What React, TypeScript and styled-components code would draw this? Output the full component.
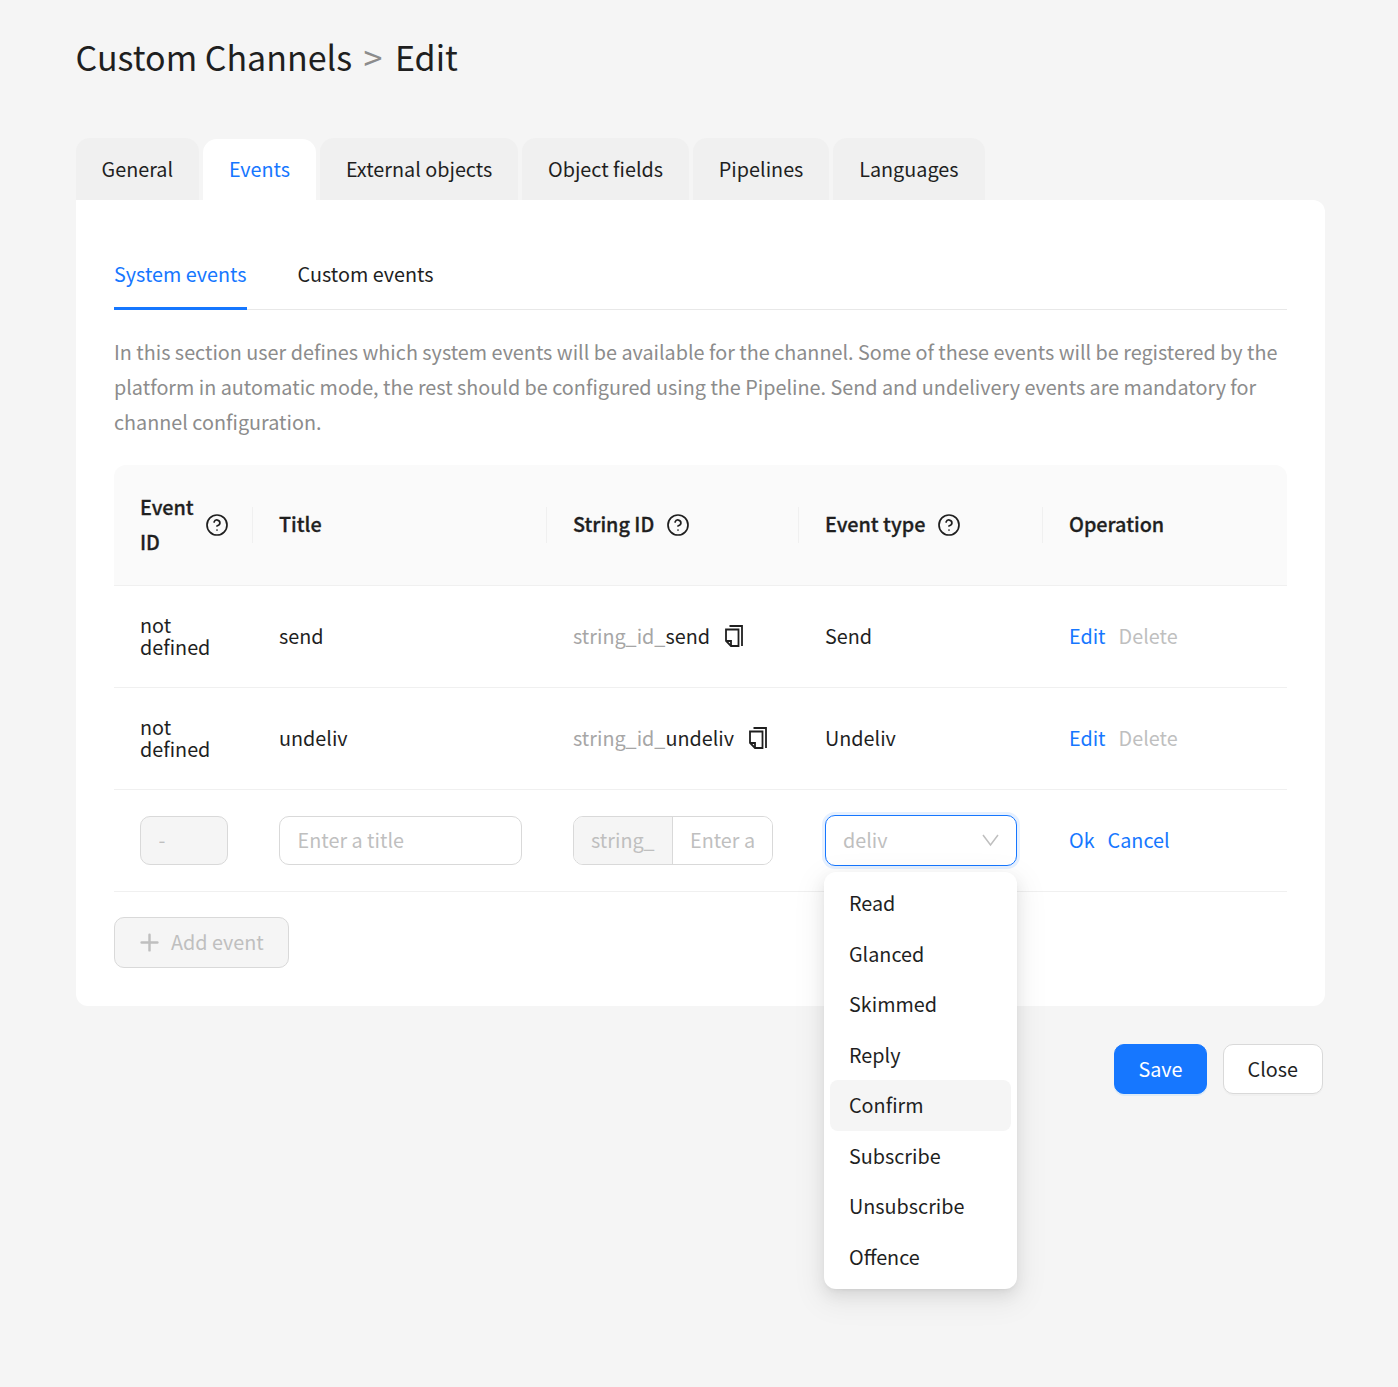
import { Fragment } from "react";
import styled, { createGlobalStyle } from "styled-components";
import { CircleHelp, Plus } from "lucide-react";

const GlobalStyle = createGlobalStyle`
  html, body {
    margin: 0;
    background: #f5f5f5;
    font-family: "Noto Sans CJK SC", "Noto Sans", sans-serif;
    color: #1f1f1f;
  }
  * { box-sizing: border-box; }
`;

const Page = styled.div`
  width: 1398px;
  height: 1387px;
  padding: 31px 73px 0 75.6px;
`;

const Breadcrumb = styled.h1`
  display: flex;
  align-items: center;
  height: 52px;
  margin: 0 0 55px;
  font-size: 34px;
  font-weight: 400;
  line-height: 52px;
`;

const Separator = styled.span`
  margin: 0 12.5px 0 11.5px;
  color: #8c8c8c;
`;

const TabBar = styled.div`
  display: flex;
  align-items: flex-end;
  gap: 3.8px;
  height: 62px;
`;

const Tab = styled.div<{ $active?: boolean }>`
  display: flex;
  align-items: center;
  height: ${(p) => (p.$active ? "61px" : "62px")};
  padding: 0 26px 2px;
  border-radius: 14px 14px 0 0;
  background: ${(p) => (p.$active ? "#fff" : "#f0f0f0")};
  color: ${(p) => (p.$active ? "#1677ff" : "#1f1f1f")};
  font-size: 19.8px;
`;

const Card = styled.div`
  width: 1249.4px;
  height: 806px;
  padding: 38px 38px 38px 38.4px;
  border-radius: 0 12px 12px 12px;
  background: #fff;
`;

const SubTabBar = styled.div`
  display: flex;
  gap: 51px;
  height: 72px;
  border-bottom: 1px solid #e8e8e8;
`;

const SubTab = styled.div<{ $active?: boolean }>`
  height: 72px;
  border-bottom: ${(p) => (p.$active ? "3px solid #1677ff" : "none")};
  color: ${(p) => (p.$active ? "#1677ff" : "#1f1f1f")};
  font-size: 19.8px;
  line-height: 72px;
`;

const Description = styled.p`
  margin: 24px 0 26px;
  color: #8c8c8c;
  font-size: 19.8px;
  line-height: 35px;
`;

const Table = styled.div`
  display: grid;
  grid-template-columns: 139px 294px 252px 244px 244px;
  font-size: 19.8px;
`;

const HeadCell = styled.div<{ $first?: boolean; $last?: boolean }>`
  position: relative;
  display: flex;
  align-items: center;
  gap: 12px;
  height: 121px;
  padding: 0 26px 3px;
  border-bottom: 1px solid #f0f0f0;
  background: #fafafa;
  border-radius: ${(p) => (p.$first ? "12px 0 0 0" : p.$last ? "0 12px 0 0" : "0")};
  font-weight: 500;
  line-height: 35px;
  -webkit-text-stroke: 0.3px #1f1f1f;

  &::after {
    content: "";
    display: ${(p) => (p.$last ? "none" : "block")};
    position: absolute;
    top: 42px;
    right: 0;
    width: 1px;
    height: 36px;
    background: #f0f0f0;
  }
`;

const HeadLabel = styled.span<{ $narrow?: boolean }>`
  flex: none;
  width: ${(p) => (p.$narrow ? "53px" : "auto")};
`;

const HelpIcon = styled(CircleHelp)`
  flex: none;
  width: 24px;
  height: 24px;
  margin-top: 2px;
  stroke-width: 1.7;
  color: #1f1f1f;
`;

const Cell = styled.div`
  display: flex;
  align-items: center;
  height: 102px;
  padding: 0 26px 2px;
  border-bottom: 1px solid #f0f0f0;
  line-height: 22px;
`;

const FormCell = styled(Cell)`
  padding-bottom: 0;
`;

const OverlayCell = styled(FormCell)`
  position: relative;
`;

const Prefix = styled.span`
  color: #a6a6a6;
`;

const CopyIcon = styled.svg`
  flex: none;
  width: 18px;
  height: 22px;
  margin-left: 15px;
  fill: none;
  stroke: #1f1f1f;
  stroke-width: 1.8;
`;

const Link = styled.span<{ $muted?: boolean }>`
  margin-right: 13px;
  color: ${(p) => (p.$muted ? "#bfbfbf" : "#1677ff")};
`;

const Field = styled.input<{ $width: string }>`
  width: ${(p) => p.$width};
  height: 49px;
  padding: 0 17.6px 2px;
  border: 1px solid #d9d9d9;
  border-radius: 10px;
  background: #fff;
  color: #1f1f1f;
  font: inherit;
  outline: none;

  &::placeholder {
    color: #bfbfbf;
    opacity: 1;
  }

  &:disabled {
    background: #f5f5f5;
  }
`;

const InputGroup = styled.div`
  display: flex;
  width: 200px;
  height: 49px;
  border: 1px solid #d9d9d9;
  border-radius: 10px;
  overflow: hidden;
`;

const Addon = styled.div`
  flex: none;
  width: 99px;
  padding-left: 17px;
  border-right: 1px solid #d9d9d9;
  background: #f5f5f5;
  color: #bfbfbf;
  line-height: 45px;
`;

const GroupInput = styled.input`
  flex: 1;
  min-width: 0;
  padding: 0 17px 2px;
  border: none;
  background: #fff;
  font: inherit;
  outline: none;

  &::placeholder {
    color: #bfbfbf;
    opacity: 1;
  }
`;

const SelectBox = styled.div`
  display: flex;
  align-items: center;
  justify-content: space-between;
  width: 194px;
  height: 51px;
  padding: 0 17px 2px;
  border: 1px solid #1677ff;
  border-radius: 10px;
  background: #fff;
  box-shadow: 0 0 0 3px rgba(22, 119, 255, 0.1);
  color: #bfbfbf;
`;

const Chevron = styled.svg`
  width: 17px;
  height: 14px;
  fill: none;
  stroke: #bfbfbf;
  stroke-width: 1.5;
`;

const Dropdown = styled.div`
  position: absolute;
  top: 82px;
  left: 25px;
  z-index: 2;
  width: 193px;
  padding: 6px 6px 7px;
  border-radius: 12px;
  background: #fff;
  box-shadow: 0 6px 16px rgba(0, 0, 0, 0.08), 0 3px 6px -4px rgba(0, 0, 0, 0.12),
    0 9px 28px 8px rgba(0, 0, 0, 0.05);
`;

const Option = styled.div<{ $active?: boolean }>`
  height: 50.55px;
  padding-left: 19px;
  border-radius: 8px;
  background: ${(p) => (p.$active ? "#f5f5f5" : "transparent")};
  line-height: 50px;
`;

const AddButton = styled.button`
  display: flex;
  align-items: center;
  gap: 8px;
  width: 175px;
  height: 51px;
  margin-top: 25px;
  padding: 0 21px 2px;
  border: 1px solid #d9d9d9;
  border-radius: 10px;
  background: #f5f5f5;
  color: #bfbfbf;
  font: inherit;
  font-size: 19.8px;
  white-space: nowrap;
`;

const AddIcon = styled(Plus)`
  flex: none;
  width: 27px;
  height: 27px;
  margin-top: 2px;
  stroke-width: 2.2;
`;

const Footer = styled.div`
  display: flex;
  justify-content: flex-end;
  gap: 16px;
  width: 1247.4px;
  margin-top: 38px;
`;

const ActionButton = styled.button<{ $primary?: boolean }>`
  height: 50px;
  padding: 0 ${(p) => (p.$primary ? "23px" : "24px")} 2px;
  border: 1px solid ${(p) => (p.$primary ? "#1677ff" : "#d9d9d9")};
  border-radius: 10px;
  background: ${(p) => (p.$primary ? "#1677ff" : "#fff")};
  box-shadow: 0 2px 0 ${(p) => (p.$primary ? "rgba(5, 145, 255, 0.1)" : "rgba(0, 0, 0, 0.02)")};
  color: ${(p) => (p.$primary ? "#fff" : "#1f1f1f")};
  font: inherit;
  font-size: 19.8px;
`;

const tabs = ["General", "Events", "External objects", "Object fields", "Pipelines", "Languages"];
const options = ["Read", "Glanced", "Skimmed", "Reply", "Confirm", "Subscribe", "Unsubscribe", "Offence"];
const events = [
  { title: "send", type: "Send" },
  { title: "undeliv", type: "Undeliv" },
];

function Copy() {
  return (
    <CopyIcon viewBox="0 0 18 22">
      <path d="M4.5 1H17v20" />
      <path d="M1 4.5h12.5V21H6l-5-5z" />
      <path d="M1 16h5v5" />
    </CopyIcon>
  );
}

export default function App() {
  return (
    <Page>
      <GlobalStyle />
      <Breadcrumb>
        Custom Channels<Separator>&gt;</Separator>Edit
      </Breadcrumb>
      <TabBar>
        {tabs.map((tab) => (
          <Tab key={tab} $active={tab === "Events"}>
            {tab}
          </Tab>
        ))}
      </TabBar>
      <Card>
        <SubTabBar>
          <SubTab $active>System events</SubTab>
          <SubTab>Custom events</SubTab>
        </SubTabBar>
        <Description>
          In this section user defines which system events will be available for the channel. Some of these events
          will be registered by the platform in automatic mode, the rest should be configured using the Pipeline. Send
          and undelivery events are mandatory for channel configuration.
        </Description>
        <Table>
          <HeadCell $first>
            <HeadLabel $narrow>Event ID</HeadLabel>
            <HelpIcon />
          </HeadCell>
          <HeadCell>Title</HeadCell>
          <HeadCell>
            String ID
            <HelpIcon />
          </HeadCell>
          <HeadCell>
            Event type
            <HelpIcon />
          </HeadCell>
          <HeadCell $last>Operation</HeadCell>

          {events.map((event) => (
            <Fragment key={event.title}>
              <Cell>not defined</Cell>
              <Cell>{event.title}</Cell>
              <Cell>
                <Prefix>string_id_</Prefix>
                {event.title}
                <Copy />
              </Cell>
              <Cell>{event.type}</Cell>
              <Cell>
                <Link>Edit</Link>
                <Link $muted>Delete</Link>
              </Cell>
            </Fragment>
          ))}

          <FormCell>
            <Field $width="88px" placeholder="-" disabled />
          </FormCell>
          <FormCell>
            <Field $width="243px" placeholder="Enter a title" />
          </FormCell>
          <FormCell>
            <InputGroup>
              <Addon>string_</Addon>
              <GroupInput placeholder="Enter a string ID" />
            </InputGroup>
          </FormCell>
          <OverlayCell>
            <SelectBox>
              deliv
              <Chevron viewBox="0 0 17 14">
                <path d="M1 2l7.5 10L16 2" />
              </Chevron>
            </SelectBox>
            <Dropdown>
              {options.map((option) => (
                <Option key={option} $active={option === "Confirm"}>
                  {option}
                </Option>
              ))}
            </Dropdown>
          </OverlayCell>
          <Cell>
            <Link>Ok</Link>
            <Link>Cancel</Link>
          </Cell>
        </Table>
        <AddButton disabled>
          <AddIcon />
          Add event
        </AddButton>
      </Card>
      <Footer>
        <ActionButton $primary>Save</ActionButton>
        <ActionButton>Close</ActionButton>
      </Footer>
    </Page>
  );
}
